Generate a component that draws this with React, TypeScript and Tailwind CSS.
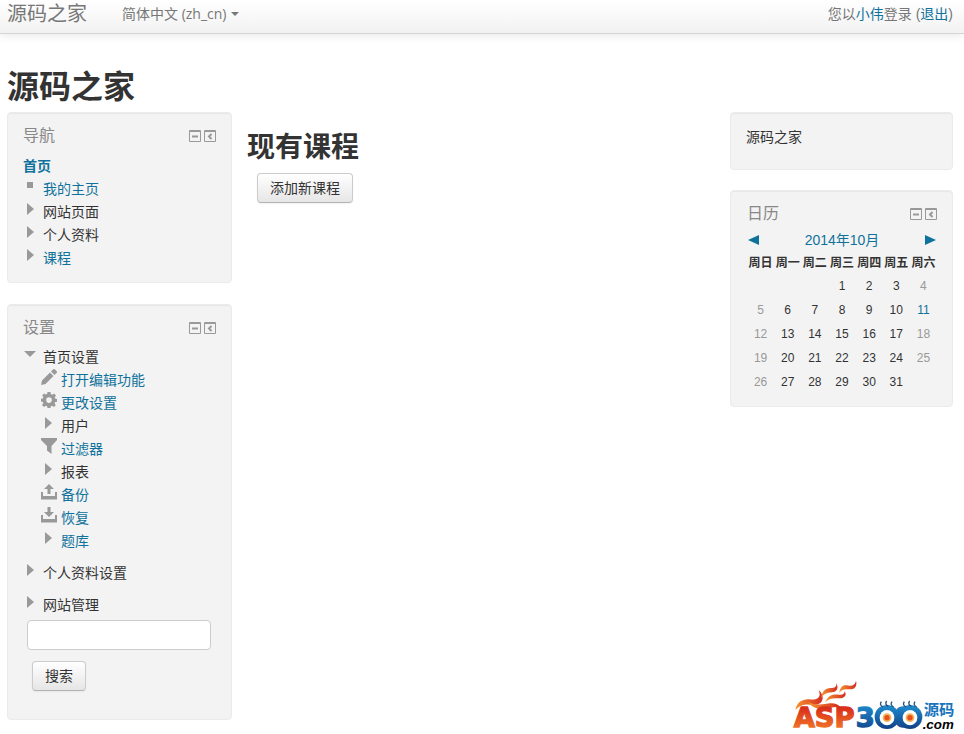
import { ReactNode } from 'react';
import cn from 'clsx';

type IconName =
  | 'square'
  | 'right'
  | 'down'
  | 'edit'
  | 'gear'
  | 'filter'
  | 'backup'
  | 'restore';

type Item = {
  label: string;
  icon: IconName;
  link?: boolean;
};

const navItems: Item[] = [
  { label: '我的主页', icon: 'square', link: true },
  { label: '网站页面', icon: 'right' },
  { label: '个人资料', icon: 'right' },
  { label: '课程', icon: 'right', link: true },
];

const frontPageItems: Item[] = [
  { label: '打开编辑功能', icon: 'edit', link: true },
  { label: '更改设置', icon: 'gear', link: true },
  { label: '用户', icon: 'right' },
  { label: '过滤器', icon: 'filter', link: true },
  { label: '报表', icon: 'right' },
  { label: '备份', icon: 'backup', link: true },
  { label: '恢复', icon: 'restore', link: true },
  { label: '题库', icon: 'right', link: true },
];

const weekdays = ['周日', '周一', '周二', '周三', '周四', '周五', '周六'];

const FIRST_WEEKDAY = 3;
const DAYS = 31;
const TODAY = 11;

const weeks = Array.from({ length: 5 }, (_, week) =>
  Array.from({ length: 7 }, (_, day) => {
    const date = week * 7 + day - FIRST_WEEKDAY + 1;
    return date > 0 && date <= DAYS ? date : null;
  })
);

const iconShapes: Record<IconName, ReactNode> = {
  square: <path d="M4 4h6v6H4z" />,
  right: <path d="M4 2l7 6-7 6z" />,
  down: <path d="M1 5h12l-6 6z" />,
  edit: (
    <path d="M0 16l1-4.500L9 3.500 12.500 7 4.500 15zM10 2.500l2-2a1.400 1.400 0 0 1 2 0L15.500 2a1.400 1.400 0 0 1 0 2l-2 2z" />
  ),
  gear: (
    <path
      fillRule="evenodd"
      d="M6.500 0h3l.4 2.200 1.300.5L13 1.400 15 3.500l-1.300 1.800.5 1.200 1.800.4v2.800l-1.900.4-.5 1.300L14.800 13 13 15l-1.900-1.300-1.200.5L9.500 16h-3l-.4-1.800-1.300-.5L3 15 1 13l1.300-1.800-.5-1.200L0 9.600V6.800l1.900-.4.5-1.200L1.200 3.400 3 1.400l1.800 1.200 1.300-.5zM8 5.300a2.800 2.800 0 1 0 0 5.600 2.800 2.800 0 0 0 0-5.600z"
    />
  ),
  filter: <path d="M0 0h16v2l-5.500 6v8L6 12.500V8L0 2z" />,
  backup: <path d="M8 0l5 5H9.500v5h-3V5H3zM0 8h2v4h12V8h2v7.500H0z" />,
  restore: <path d="M6.500 0h3v5H13l-5 5-5-5h3.500zM0 8h2v4h12V8h2v7.500H0z" />,
};

const Icon = ({ name }: { name: IconName }) => (
  <svg viewBox="0 0 16 16" className="size-4 shrink-0 fill-[#999]">
    {iconShapes[name]}
  </svg>
);

const TreeItem = ({ label, icon, link }: Item) => (
  <div className="flex h-[23px] gap-1">
    <Icon name={icon} />
    {link ? (
      <a href="#" className="pt-px text-[#0f729c]">
        {label}
      </a>
    ) : (
      <span className="pt-px">{label}</span>
    )}
  </div>
);

const Block = ({
  title,
  className,
  children,
}: {
  title?: string;
  className?: string;
  children: ReactNode;
}) => (
  <section
    className={cn(
      'rounded border border-[#ebebeb] bg-[#f3f3f3] shadow-[inset_0_1px_1px_rgba(0,0,0,0.05)]',
      className
    )}
  >
    {title && (
      <div className="flex h-[41px] items-center justify-between pt-1">
        <h2 className="text-base text-[#888]">{title}</h2>
        <div className="flex gap-[3px]">
          <button type="button" aria-label="隐藏">
            <svg viewBox="0 0 12 12" className="size-3 fill-none stroke-[#999]">
              <path d="M.5.5h11v11H.5zM0 1.500h12" />
              <path d="M3 6.500h6" strokeWidth="2" />
            </svg>
          </button>
          <button type="button" aria-label="停靠">
            <svg viewBox="0 0 12 12" className="size-3 fill-none stroke-[#999]">
              <path d="M.5.5h11v11H.5zM0 1.500h12" />
              <path d="M7.500 4L5 6.500 7.500 9" strokeWidth="2" />
            </svg>
          </button>
        </div>
      </div>
    )}
    {children}
  </section>
);

const buttonClass =
  'h-[30px] rounded border border-[#ccc] border-b-[#b3b3b3] bg-linear-to-b from-white to-[#e6e6e6] px-3 shadow-xs';

const Calendar = () => (
  <>
    <div className="-mt-1 flex h-6 items-center justify-between px-px text-[#0f729c]">
      <a href="#" aria-label="上月">
        <svg viewBox="0 0 11 10" className="h-2.5 w-[11px] fill-current">
          <path d="M11 0v10L0 5z" />
        </svg>
      </a>
      <a href="#">2014年10月</a>
      <a href="#" aria-label="下月">
        <svg viewBox="0 0 11 10" className="h-2.5 w-[11px] fill-current">
          <path d="M0 0v10l11-5z" />
        </svg>
      </a>
    </div>
    <table className="w-full table-fixed text-center text-xs">
      <thead>
        <tr className="h-[22px]">
          {weekdays.map((day) => (
            <th key={day} scope="col" className="whitespace-nowrap">
              {day}
            </th>
          ))}
        </tr>
      </thead>
      <tbody>
        {weeks.map((week, i) => (
          <tr key={i} className="h-6">
            {week.map((date, day) => (
              <td
                key={day}
                className={cn({
                  'text-[#0f729c]': date === TODAY,
                  'text-[#999]': date !== TODAY && (day === 0 || day === 6),
                })}
              >
                {date}
              </td>
            ))}
          </tr>
        ))}
      </tbody>
    </table>
  </>
);

const SiteLogo = () => (
  <svg
    viewBox="0 0 540 180"
    className="absolute right-0 bottom-0 h-[60px] w-[180px]"
    role="img"
    aria-label="ASP300源码.com"
  >
    <defs>
      <linearGradient id="fire" x1="0" y1="0" x2="0" y2="1">
        <stop offset="0.2" stopColor="#d9301a" />
        <stop offset="1" stopColor="#f5852a" />
      </linearGradient>
      <linearGradient id="flame" x1="0" y1="0" x2="1" y2="0">
        <stop offset="0" stopColor="#f5952f" />
        <stop offset="1" stopColor="#d42a20" />
      </linearGradient>
      <linearGradient id="water" x1="0" y1="0" x2="0" y2="1">
        <stop offset="0" stopColor="#1e8fd0" />
        <stop offset="1" stopColor="#123f86" />
      </linearGradient>
    </defs>
    <g fill="url(#flame)">
      <path d="M34 108C38 84 58 74 76 76C98 79 114 72 104 48C124 66 118 90 96 92C76 93 56 84 34 108Z" />
      <path d="M72 84C92 94 116 92 138 88C152 87 162 90 170 100C148 96 132 106 108 104C90 103 80 94 72 84Z" />
      <path d="M112 72C112 54 124 42 140 42C152 42 160 38 156 27C166 42 158 54 144 55C130 56 120 58 112 72Z" />
      <path d="M124 84C132 64 148 60 164 62C176 64 182 60 182 52C190 64 180 74 166 73C148 72 136 72 124 84Z" />
      <path d="M166 56C168 38 178 31 194 35C206 37 214 31 216 20C221 38 210 47 196 46C182 45 174 45 166 56Z" />
    </g>
    <g
      className="[font-family:'DejaVu_Sans',sans-serif] text-[82px] font-bold"
      strokeWidth="4"
    >
      <text x="29" y="160" fill="url(#fire)" stroke="url(#fire)">
        ASP
      </text>
      <text x="215" y="160" fill="url(#water)" stroke="url(#water)">
        300
      </text>
    </g>
    {[309, 378].map((x) => (
      <g key={x}>
        <ellipse cx={x} cy="129" rx="37" ry="36" fill="url(#water)" />
        <ellipse cx={x} cy="131" rx="22" ry="23" fill="#fff" />
        <circle cx={x} cy="131" r="13" fill="#f3b35c" />
        <circle cx={x} cy="131" r="8" fill="#e6501e" />
        <path
          d={`M${x - 12} 99q-12-6-5-16M${x + 4} 97q-12-6-5-16M${x + 20} 99q-12-6-5-16`}
          fill="none"
          stroke="#2a4f7c"
          strokeWidth="4"
        />
      </g>
    ))}
    <text
      x="419"
      y="123"
      fill="#1774bd"
      className="[font-family:'Noto_Sans_CJK_SC',sans-serif] text-[46px] font-bold"
    >
      源码
    </text>
    <text
      x="416"
      y="166"
      className="[font-family:'Liberation_Sans',sans-serif] text-[40px] font-bold italic"
    >
      .com
    </text>
  </svg>
);

const App = () => {
  return (
    <div className="relative min-h-screen bg-white pb-3.5 [font-family:'Liberation_Sans','Noto_Sans_CJK_SC',sans-serif] text-sm text-[#333]">
      <header className="flex h-[34px] items-center border-b border-[#d4d4d4] bg-linear-to-b from-white to-[#f2f2f2] pr-[11px] pb-[5px] pl-[7px] text-[#777] shadow-[0_1px_10px_rgba(0,0,0,0.1)]">
        <a href="#" className="mr-[35px] text-xl">
          源码之家
        </a>
        <button
          type="button"
          className="flex items-center gap-[5px] [font-family:'Open_Sans','Noto_Sans_CJK_SC',sans-serif]"
        >
          简体中文 (zh_cn)
          <svg viewBox="0 0 8 4" className="h-1 w-2 fill-current">
            <path d="M0 0h8L4 4z" />
          </svg>
        </button>
        <p className="ml-auto">
          您以
          <a href="#" className="text-[#0f729c]">
            小伟
          </a>
          登录 (
          <a href="#" className="text-[#0f729c]">
            退出
          </a>
          )
        </p>
      </header>

      <div className="pr-[11px] pl-[7px]">
        <h1 className="pt-[33px] pb-[5px] text-[32px] leading-10 font-bold">
          源码之家
        </h1>

        <div className="flex items-start gap-[15px]">
          <aside className="flex w-[225px] flex-col gap-[21px]">
            <Block title="导航" className="px-[15px] pb-3">
              <a
                href="#"
                className="block h-6 pt-0.5 font-bold text-[#0f729c]"
              >
                首页
              </a>
              {navItems.map((item) => (
                <TreeItem key={item.label} {...item} />
              ))}
            </Block>

            <Block title="设置" className="px-[15px] pb-7">
              <TreeItem label="首页设置" icon="down" />
              <div className="mb-[9px] pl-[18px]">
                {frontPageItems.map((item) => (
                  <TreeItem key={item.label} {...item} />
                ))}
              </div>
              <div className="flex flex-col gap-[9px]">
                <TreeItem label="个人资料设置" icon="right" />
                <TreeItem label="网站管理" icon="right" />
              </div>
              <form
                className="mt-[3px] pr-[5px] pl-1"
                onSubmit={(e) => e.preventDefault()}
              >
                <input
                  type="text"
                  aria-label="搜索"
                  className="mb-[11px] block h-[30px] w-full rounded border border-[#ccc] bg-white px-1.5"
                />
                <button type="submit" className={cn(buttonClass, 'ml-[5px]')}>
                  搜索
                </button>
              </form>
            </Block>
          </aside>

          <main className="flex-1 pt-4">
            <h2 className="text-[28px] leading-10 font-bold">现有课程</h2>
            <button
              type="button"
              className={cn(buttonClass, 'mt-[5px] ml-2.5')}
            >
              添加新课程
            </button>
          </main>

          <aside className="flex w-[223px] flex-col gap-5">
            <Block className="px-[15px] pt-3.5 pb-[22px]">
              <p>源码之家</p>
            </Block>
            <Block title="日历" className="pr-[15px] pb-3 pl-4">
              <Calendar />
            </Block>
          </aside>
        </div>
      </div>

      <SiteLogo />
    </div>
  );
};

export default App;
